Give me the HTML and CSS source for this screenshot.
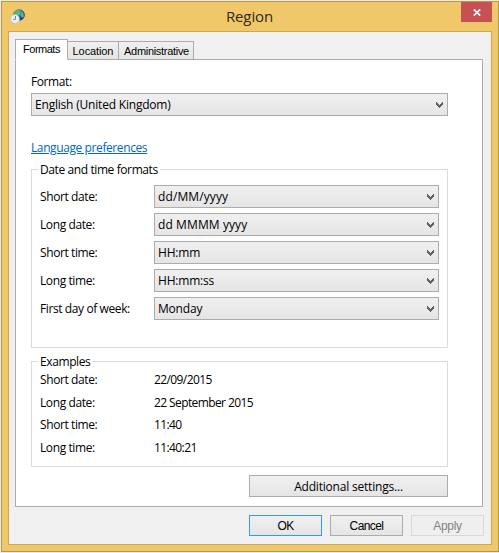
FILE: index.html
```html
<!DOCTYPE html>
<html lang="en">
<head>
<meta charset="utf-8">
<title>Region</title>
<link rel="stylesheet" href="styles.css">
</head>
<body>
<svg class="defs" aria-hidden="true">
  <symbol id="chevron" viewBox="0 0 7 6"><path d="M0 0h1v1h1v1h1v1h1v-1h1v-1h1v-1h1v3h-1v1h-1v1h-1v1h-1v-1h-1v-1h-1v-1h-1z"/></symbol>
</svg>
<main class="window">
  <header class="titlebar">
    <svg class="app-icon" viewBox="0 0 16 16">
      <defs><radialGradient id="sea" cx=".4" cy=".3"><stop offset="0" stop-color="#a5dcf5"/><stop offset=".5" stop-color="#378bd2"/><stop offset="1" stop-color="#123e9b"/></radialGradient></defs>
      <circle cx="9" cy="7" r="5.8" fill="url(#sea)"/>
      <path d="M5 3.5l3-1.5 2 .8-1 2.2-2.5 2-2.5-.5zM11.5 3l2 2 .5 3.5-2 1.5-1.5-2.5z" fill="#62b947"/>
      <circle cx="5" cy="11" r="4.4" fill="#edf1f3" stroke="#bcc3c6" stroke-width=".8"/>
      <path d="M5.5 8v3.3h-2.5" fill="none" stroke="#727d85" stroke-width=".9"/>
    </svg>
    <h1 class="title">Region</h1>
    <button class="close" aria-label="Close"><svg viewBox="0 0 8 7"><path d="M.8.4l6.4 6.2M7.2.4L.8 6.6"/></svg></button>
  </header>
  <div class="client">
    <nav class="tabs">
      <span class="tab active">Formats</span><span class="tab location">Location</span><span class="tab admin">Administrative</span>
    </nav>
    <section class="panel">
      <div class="label format-label">Format:</div>
      <div class="combo"><span class="t-format">English (United Kingdom)</span><svg><use href="#chevron"/></svg></div>
      <div class="link-row"><a class="link">Language preferences</a></div>
      <fieldset class="group formats">
        <legend>Date and time formats</legend>
        <div class="row"><span class="label">Short date:</span><div class="combo"><span class="date-pattern">dd/MM/yyyy</span><svg><use href="#chevron"/></svg></div></div>
        <div class="row"><span class="label">Long date:</span><div class="combo"><span class="date-pattern">dd MMMM yyyy</span><svg><use href="#chevron"/></svg></div></div>
        <div class="row"><span class="label">Short time:</span><div class="combo"><span>HH:mm</span><svg><use href="#chevron"/></svg></div></div>
        <div class="row"><span class="label">Long time:</span><div class="combo"><span>HH:mm:ss</span><svg><use href="#chevron"/></svg></div></div>
        <div class="row"><span class="label">First day of week:</span><div class="combo"><span>Monday</span><svg><use href="#chevron"/></svg></div></div>
      </fieldset>
      <fieldset class="group examples">
        <legend>Examples</legend>
        <div class="example"><span class="label">Short date:</span><span class="digits">22/09/2015</span></div>
        <div class="example"><span class="label">Long date:</span><span class="digits">22 September 2015</span></div>
        <div class="example"><span class="label">Short time:</span><span class="digits">11:40</span></div>
        <div class="example"><span class="label">Long time:</span><span class="digits">11:40:21</span></div>
      </fieldset>
      <button class="button additional">Additional settings...</button>
    </section>
    <footer class="actions">
      <button class="button ok">OK</button>
      <button class="button">Cancel</button>
      <button class="button disabled" disabled>Apply</button>
    </footer>
  </div>
</main>
</body>
</html>
```
FILE: styles.css
```css
* { box-sizing: border-box; }
body {
  margin: 0;
  padding: 1px 0 1px 1px;
  width: 499px;
  height: 553px;
  overflow: hidden;
  background: #e9ebe6;
  color: #000;
  font: 12px/16px "Open Sans", "Noto Sans", sans-serif;
  letter-spacing: -0.4px;
}
.defs { position: absolute; width: 0; height: 0; }
.window {
  width: 498px;
  height: 551px;
  border: 1px solid #b7974f;
  background: #f0c869;
  padding: 0 6px;
}
.titlebar { display: flex; height: 29px; justify-content: space-between; }
.app-icon { width: 16px; height: 16px; margin: 6px 0 0 2px; }
.title {
  margin: 2px 0 0 12px;
  font-size: 15px;
  font-weight: 400;
  line-height: 24px;
  letter-spacing: -0.1px;
  color: #302819;
}
.close {
  width: 31px;
  height: 20px;
  margin: 0;
  padding: 0;
  border: 0;
  background: #c75050;
  display: flex;
  align-items: center;
  justify-content: center;
}
.close svg { width: 8px; height: 7px; margin-left: 1px; }
.close path { stroke: #fff; stroke-width: 1.7; fill: none; }
.client {
  height: 514px;
  border: 1px solid #cba758;
  background: #f0f0f0;
  padding: 7px 8px 0 6px;
}
.tabs {
  display: flex;
  align-items: flex-end;
  height: 21px;
  font: 11px/19px "Liberation Sans", Arial, sans-serif;
  letter-spacing: -0.3px;
}
.tab {
  height: 19px;
  border: 1px solid #acacac;
  border-left: 0;
  background: linear-gradient(#f0f0f0, #e5e5e5);
  text-align: center;
}
.tab.active {
  width: 53px;
  height: 21px;
  border-left: 1px solid #acacac;
  border-bottom-color: #fff;
  background: #fff;
  position: relative;
  z-index: 1;
  letter-spacing: -0.5px;
}
.location { width: 51px; letter-spacing: -0.1px; }
.admin { width: 75px; padding-left: 1px; }
.panel {
  height: 448px;
  margin-top: -1px;
  border: 1px solid #acacac;
  background: #fff;
  padding: 14px 34px 0 15px;
  display: flex;
  flex-direction: column;
}
.format-label { height: 19px; }
.combo {
  display: flex;
  justify-content: space-between;
  align-items: center;
  flex: none;
  height: 23px;
  border: 1px solid #acacac;
  background: linear-gradient(#f0f0f0, #e5e5e5);
  padding: 0 4px 0 3px;
  letter-spacing: -0.2px;
}
.combo svg { width: 7px; height: 6px; fill: #606060; }
.date-pattern { letter-spacing: 0.1px; }
.link-row { margin-top: 24px; height: 16px; }
.link { color: #0066cc; text-decoration: underline; }
.group { position: relative; margin: 13px 0 0; border: 1px solid #dcdcdc; min-width: 0; }
.group legend {
  position: absolute;
  top: -8px;
  left: 6px;
  padding: 0 2px;
  background: #fff;
  white-space: nowrap;
}
.formats { height: 179px; padding: 15px 8px 0; }
.row { display: grid; grid-template-columns: 114px 285px; align-items: center; height: 23px; margin-bottom: 5px; }
.examples { height: 106px; padding: 10px 8px 0; }
.example { display: grid; grid-template-columns: 114px 1fr; height: 22.7px; }
.digits { letter-spacing: -0.6px; }
.button {
  height: 21px;
  width: 73px;
  padding: 2px 0 0;
  margin: 0;
  border: 1px solid #acacac;
  background: linear-gradient(#f0f0f0, #e5e5e5);
  color: #000;
  text-align: center;
  font: 12px/17px "Liberation Sans", Arial, sans-serif;
  letter-spacing: -0.6px;
}
.additional {
  align-self: flex-end;
  flex: none;
  width: 199px;
  height: 22px;
  margin-top: 8px;
  padding: 0;
  font: 12px/19px "Open Sans", "Noto Sans", sans-serif;
  letter-spacing: -0.2px;
}
.actions { display: flex; justify-content: flex-end; gap: 8px; margin: 8px -1px 0 0; }
.ok { border-color: #3399ff; }
.disabled { border-color: #d9d9d9; background: #efefef; color: #838383; letter-spacing: -0.3px; }
```
